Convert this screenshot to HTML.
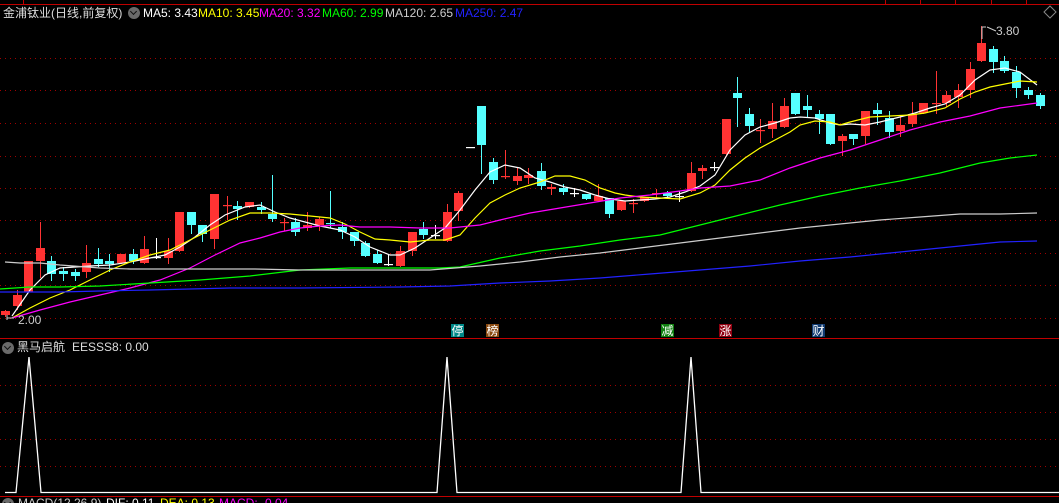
<!DOCTYPE html>
<html><head><meta charset="utf-8"><style>
html,body{margin:0;padding:0;background:#000;overflow:hidden}
body{width:1059px;height:503px;position:relative;font-family:"Liberation Sans","Noto Sans CJK SC",sans-serif}
.t{position:absolute;font-size:12px;white-space:nowrap;line-height:14px}
.ic{position:absolute;width:12px;height:12px;border-radius:50%;background:#6a6a6a}
.ic:after{content:"";position:absolute;left:3px;top:2px;width:4px;height:4px;border-right:1.5px solid #111;border-bottom:1.5px solid #111;transform:rotate(45deg)}
.sig{position:absolute;top:324px;width:13px;height:13px;color:#fff;font-size:12px;line-height:13px;text-align:center;font-family:"Noto Sans CJK SC",sans-serif}
</style></head><body>
<svg id="s" width="1059" height="503" style="position:absolute;left:0;top:0">
<g stroke="#a00000" stroke-width="1" stroke-dasharray="1,4" id="grid"></g>
<line x1="0" y1="4.5" x2="1059" y2="4.5" stroke="#c00000"/>
<g stroke="#c00000"><line x1="23.5" y1="0" x2="23.5" y2="4"/><line x1="885.5" y1="0" x2="885.5" y2="4"/><line x1="920.5" y1="0" x2="920.5" y2="4"/><line x1="955.5" y1="0" x2="955.5" y2="4"/><line x1="991.5" y1="0" x2="991.5" y2="4"/><line x1="1026.5" y1="0" x2="1026.5" y2="4"/></g>
<line x1="0" y1="338.5" x2="1059" y2="338.5" stroke="#c00000"/>
<line x1="0" y1="496.5" x2="1059" y2="496.5" stroke="#c00000"/>
<g id="c"></g>
<g fill="none" stroke-width="1.2" id="ma"></g>
<polyline fill="none" stroke="#fff" stroke-width="1.3" points="5,492.5 16,492.5 29,357 41,492.5 437,492.5 447,357 457,492.5 681,492.5 691,357 701,492.5 1059,492.5"/>
<path d="M1050 6 L1056 12 L1050 18 L1044 12 Z" fill="none" stroke="#888"/>
<path d="M982 39 V27 H986 M987 27 L996 31" fill="none" stroke="#ccc"/>
<path d="M7 318 H14 M7 315 V320" stroke="#ccc" fill="none"/>
</svg>
<div class="t" style="left:3px;top:6px;color:#ddd">金浦钛业(日线,前复权)</div>
<div class="ic" style="left:128px;top:7px"></div>
<div class="t" style="left:143px;top:6px;color:#fff">MA5: 3.43</div>
<div class="t" style="left:198px;top:6px;color:#ff0">MA10: 3.45</div>
<div class="t" style="left:259px;top:6px;color:#f0f">MA20: 3.32</div>
<div class="t" style="left:322px;top:6px;color:#0f0">MA60: 2.99</div>
<div class="t" style="left:385px;top:6px;color:#ccc">MA120: 2.65</div>
<div class="t" style="left:455px;top:6px;color:#22f">MA250: 2.47</div>
<div class="t" style="left:996px;top:24px;color:#ccc">3.80</div>
<div class="t" style="left:18px;top:313px;color:#ccc">2.00</div>
<div class="sig" style="left:451px;background:#008888">停</div>
<div class="sig" style="left:486px;background:#8a4a10">榜</div>
<div class="sig" style="left:661px;background:#108010">减</div>
<div class="sig" style="left:719px;background:#900010">涨</div>
<div class="sig" style="left:812px;background:#103a70">财</div>
<div class="ic" style="left:2px;top:342px"></div>
<div class="t" style="left:17px;top:340px;color:#ddd">黑马启航</div>
<div class="t" style="left:72px;top:340px;color:#ddd">EESSS8: 0.00</div>
<div class="ic" style="left:2px;top:498px"></div>
<div class="t" style="left:18px;top:496px;color:#ccc">MACD(12,26,9)</div>
<div class="t" style="left:106px;top:496px;color:#fff">DIF: 0.11</div>
<div class="t" style="left:160px;top:496px;color:#ff0">DEA: 0.13</div>
<div class="t" style="left:219px;top:496px;color:#f0f">MACD: -0.04</div>
<script>
var NS="http://www.w3.org/2000/svg";
function el(p,t,a){var e=document.createElementNS(NS,t);for(var k in a)e.setAttribute(k,a[k]);p.appendChild(e);return e;}
var g=document.getElementById("grid");
[58,90,123,156,188,220,253,285,318,385,412,439,466].forEach(function(y){el(g,"line",{x1:0,y1:y+.5,x2:1059,y2:y+.5});});
var C=[[5,'r',311,315,310,316],[17,'r',295,306,290,309],[28,'r',261,292,261,292],[40,'r',248,261,222,277],[51,'c',261,274,256,280],[63,'c',271,274,267,280],[75,'c',272,276,269,280],[86,'r',263,272,245,277],[98,'c',259,264,248,266],[109,'c',261,264,254,271],[121,'r',254,263,254,263],[133,'c',254,261,249,263],[144,'r',249,263,236,263],[156,'w',257,257,238,258],[168,'r',251,258,238,263],[179,'r',212,251,212,251],[191,'c',212,225,212,233],[202,'c',225,234,225,241],[214,'r',194,239,194,248],[227,'r',205,205,196,219],[237,'c',206,209,201,219],[249,'r',202,207,202,207],[261,'c',207,210,202,213],[272,'c',214,219,175,221],[284,'r',222,222,218,230],[295,'c',222,232,218,235],
[307,'r',225,228,212,230],[319,'r',219,225,217,230],[330,'c',223,223,191,227],[342,'c',227,232,222,238],[354,'c',232,241,232,245],[365,'c',243,256,241,256],[377,'c',254,263,250,263],[388,'w',264,264,255,265],[400,'r',251,266,246,266],[412,'r',232,251,232,255],[423,'c',229,235,222,238],[435,'w',235,235,225,238],[447,'r',212,241,204,241],[458,'r',193,211,191,220],[470,'w',147,147,147,147],[481,'c',106,145,106,173],[493,'c',162,180,158,183],[505,'r',176,176,150,178],[517,'r',176,181,168,184],[528,'r',175,178,168,183],[541,'c',171,186,163,189],[551,'r',187,189,184,194],[563,'c',188,192,184,194],[574,'w',193,193,188,196],
[586,'c',194,199,194,199],[598,'r',196,201,184,201],[609,'c',198,214,198,217],[621,'r',201,210,201,210],[633,'r',203,203,199,212],[644,'r',197,201,197,201],[656,'r',193,193,189,197],[667,'c',193,196,191,198],[679,'w',196,196,191,201],[691,'r',173,191,162,191],[702,'r',168,171,165,178],[714,'w',167,167,162,170],[726,'r',119,154,119,154],[737,'c',93,98,77,126],[749,'c',114,126,108,132],[760,'r',130,130,119,142],[772,'r',121,129,103,137],[784,'r',106,127,98,127],[795,'c',93,114,93,114],[807,'c',106,110,95,117],[819,'c',114,119,110,133],[830,'c',114,144,114,144],[842,'r',136,141,134,155],[853,'c',134,139,134,144],[865,'r',111,136,111,143],[877,'c',110,114,103,124],
[889,'c',118,132,111,137],[900,'r',125,131,115,136],[912,'r',114,124,102,126],[923,'r',103,113,103,113],[936,'r',103,103,71,113],[946,'r',95,103,91,106],[958,'r',90,97,84,107],[970,'r',69,90,62,97],[981,'r',43,61,26,61],[993,'c',49,62,46,72],[1004,'c',61,71,56,72],[1016,'c',72,88,66,97],[1028,'c',90,95,87,98],[1040,'c',95,106,93,108]];
var cg=document.getElementById("c");
C.forEach(function(d){var col=d[1]=='r'?'#ff3333':d[1]=='c'?'#55ffff':'#ffffff';var x=d[0];
el(cg,"line",{x1:x+.5,y1:d[4],x2:x+.5,y2:d[5]+1,stroke:col});
var h=d[3]-d[2];if(h<2){el(cg,"rect",{x:x-4,y:d[2],width:9,height:1.2,fill:col});}else el(cg,"rect",{x:x-4,y:d[2],width:9,height:h,fill:col});});
var M=[['#fff',"12,316 30,290 45,275 60,268 75,267 90,266 110,265 130,262 150,258 165,255 180,247 195,237 210,225 225,215 245,207 260,205 275,212 290,218 305,222 320,226 340,230 355,237 370,247 390,255 400,255 415,248 430,238 445,228 460,210 475,190 490,172 505,165 520,168 535,178 550,182 565,187 580,190 595,195 610,199 625,201 640,200 655,199 670,197 685,192 700,186 715,175 730,150 745,135 760,127 775,123 790,118 800,117 815,118 830,123 840,125 850,124 865,125 880,122 900,117 915,113 930,108 945,104 960,95 975,80 990,70 1005,68 1020,72 1037,85"],
['#ff0',"12,318 30,308 50,298 70,290 90,280 110,270 130,262 150,255 170,250 190,240 210,230 230,220 250,213 270,213 290,214 310,216 330,218 345,224 360,232 375,239 390,240 410,242 430,240 445,240 460,235 475,218 490,203 505,195 520,188 540,182 555,176 570,176 585,180 600,188 615,193 625,195 640,197 660,198 680,199 700,193 715,185 730,170 745,158 760,148 775,140 790,132 800,125 815,121 830,122 840,125 850,122 870,117 890,116 910,115 925,113 945,108 960,99 975,92 990,87 1005,84 1020,81 1037,82"],
['#f0f',"12,318 40,310 70,302 100,295 130,288 160,280 190,268 215,255 240,243 260,238 280,232 300,228 320,226 340,225 360,227 390,227 420,228 450,228 480,225 500,220 530,213 560,208 590,203 620,198 650,195 680,191 700,188 730,186 760,180 790,168 820,158 850,150 880,140 910,130 940,122 970,116 1000,108 1037,103"],
['#0f0',"0,289 30,287 60,287 100,286 150,283 200,280 250,276 300,270 350,268 400,268 440,268 460,267 500,258 540,251 580,246 620,240 660,235 700,225 740,215 780,205 820,196 860,188 900,181 940,173 980,163 1010,158 1037,155"],
['#ccc',"5,262 20,263 40,263 60,265 100,268 130,269 255,269 300,270 390,270 430,270 480,266 520,262 560,257 600,253 640,248 680,243 720,238 760,233 800,228 840,224 880,220 920,217 960,214 1000,214 1037,213"],
['#22f',"0,292 40,292 60,292 100,291 150,290 230,288 300,288 400,287 450,286 500,283 550,281 600,278 650,274 700,270 750,266 800,261 850,257 900,252 950,247 1000,242 1037,241"]];
var mg=document.getElementById("ma");
M.forEach(function(m){el(mg,"polyline",{points:m[1],stroke:m[0]});});
</script>
</body></html>
